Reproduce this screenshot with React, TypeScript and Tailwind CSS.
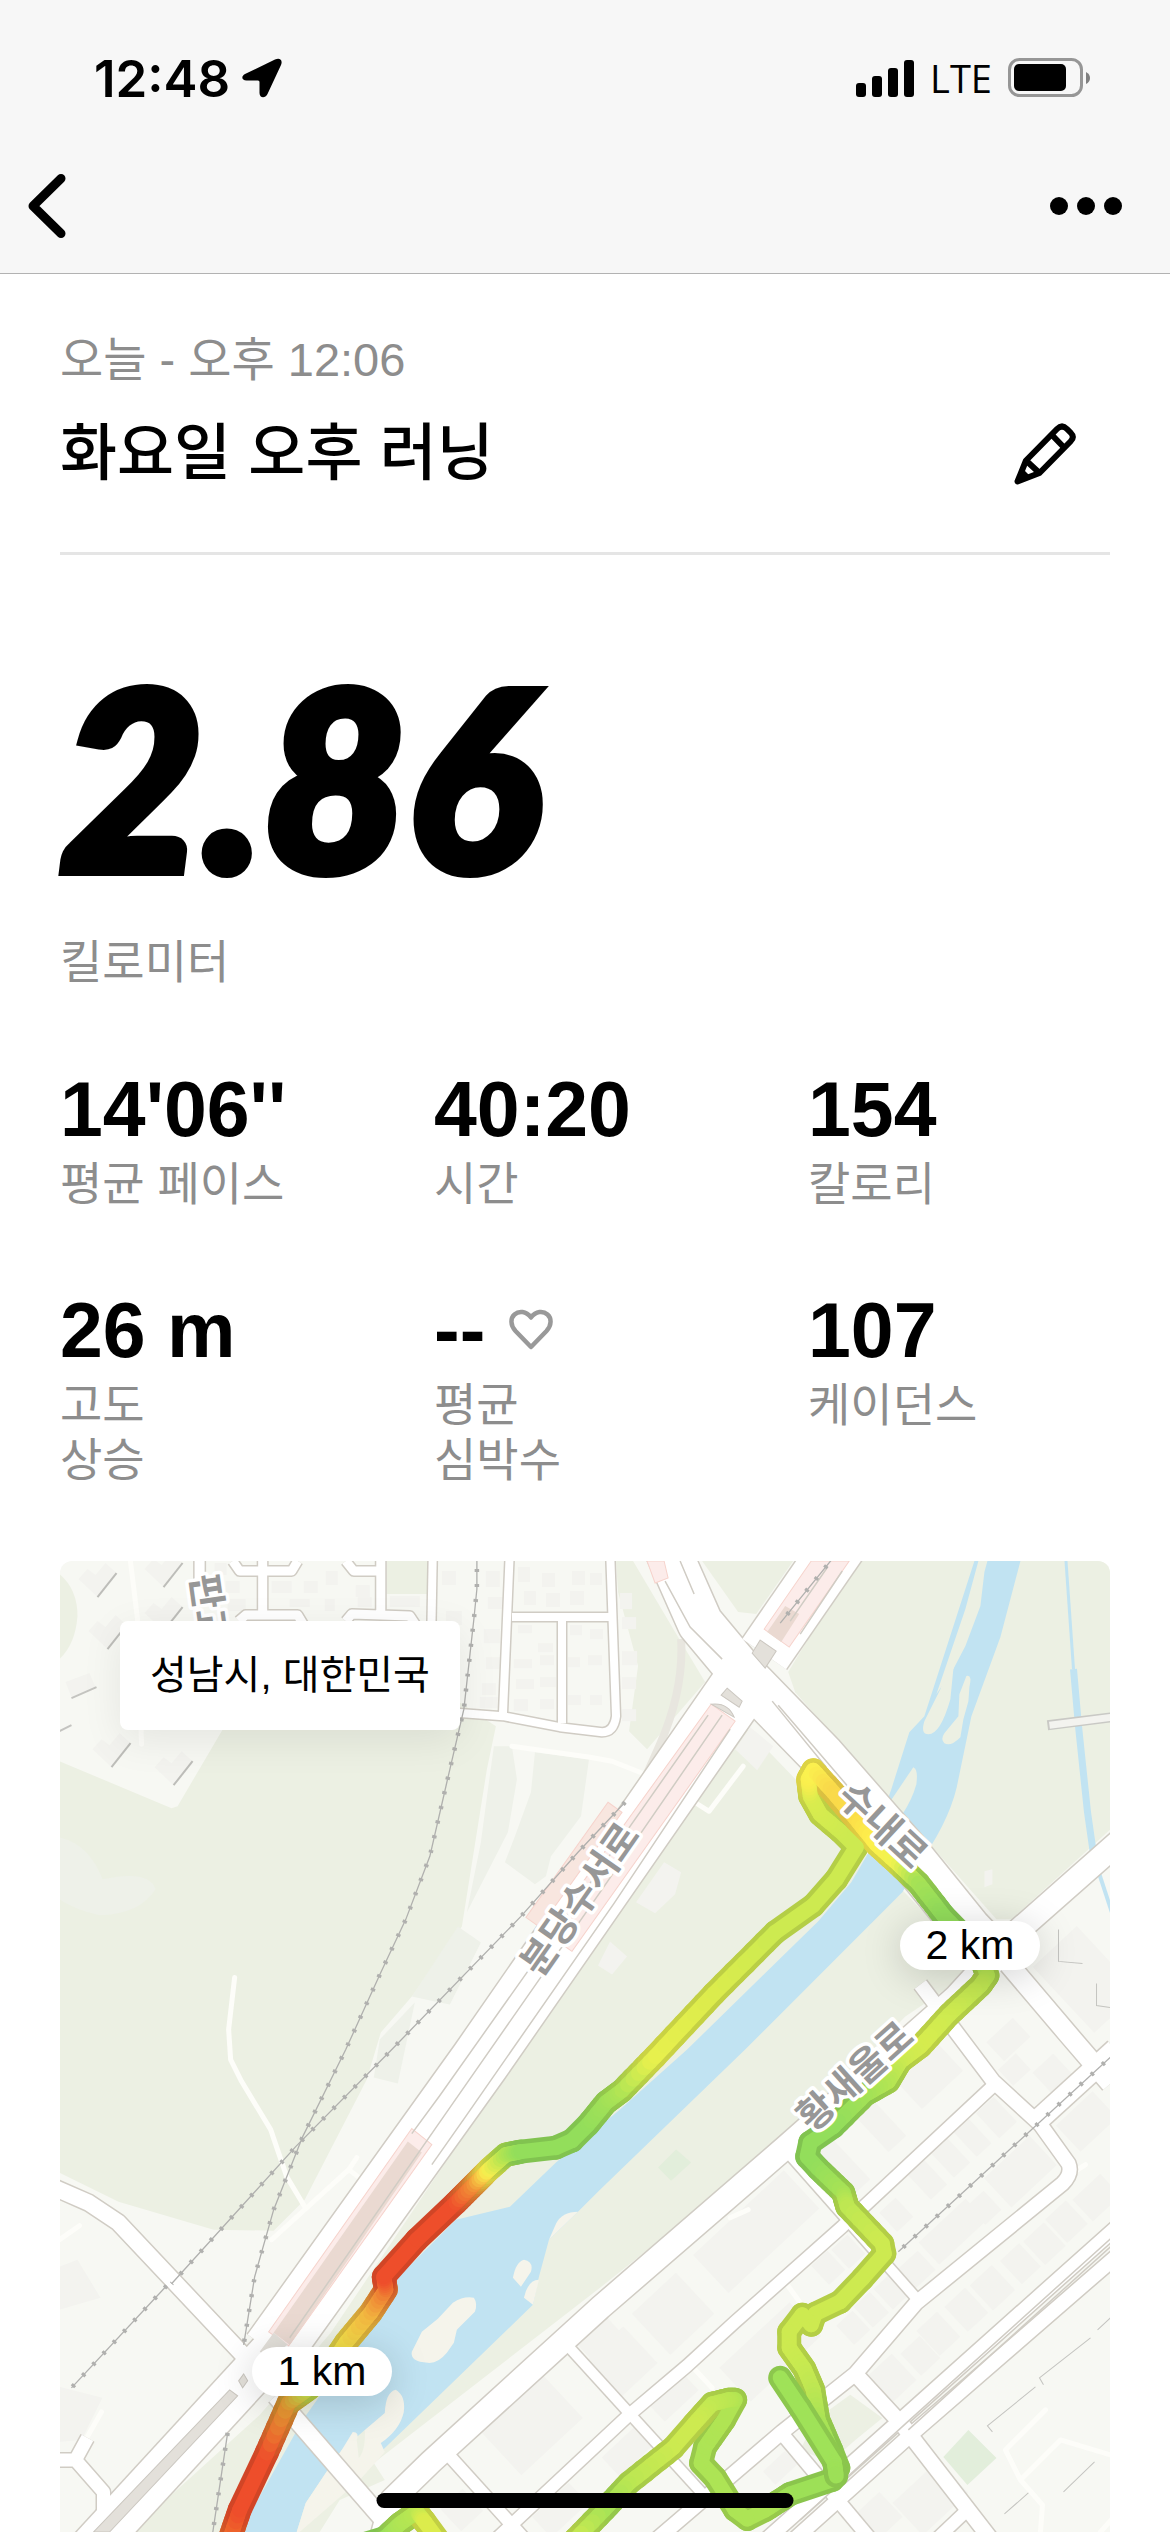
import { Fragment, type ReactNode } from "react";

type Point = [number, number];
type RoutePoint = [number, number, string];

const RED = "#ee4e2b";
const YELLOW = "#f9ee4e";
const LIME = "#cdea50";
const GRASS = "#ade455";
const GREEN = "#93de5b";

// Pace coloured route, slow (red) to fast (green)
const mainRoute: RoutePoint[] = [
  [228, 2545, "#ef7d2c"],
  [240, 2510, RED],
  [267, 2453, RED],
  [289, 2403, "#e69a33"],
  [310, 2388, LIME],
  [328, 2370, LIME],
  [346, 2343, "#f5e14a"],
  [371, 2313, "#f2b840"],
  [386, 2290, "#ee7d33"],
  [384, 2277, RED],
  [417, 2240, RED],
  [456, 2203, RED],
  [474, 2185, "#f08a35"],
  [489, 2170, YELLOW],
  [506, 2155, "#b4e551"],
  [521, 2152, GREEN],
  [556, 2148, GREEN],
  [572, 2141, GREEN],
  [588, 2125, GREEN],
  [606, 2103, "#9fe058"],
  [622, 2091, GRASS],
  [655, 2057, "#e8f04d"],
  [714, 1994, "#dcec4c"],
  [775, 1933, LIME],
  [813, 1906, LIME],
  [836, 1880, LIME],
  [856, 1848, LIME],
  [840, 1832, LIME],
  [820, 1815, "#d3eb4f"],
  [810, 1797, "#d9ec4e"],
  [808, 1780, YELLOW],
  [813, 1771, "#fbf24f"],
  [833, 1793, "#f9d94a"],
  [855, 1819, "#fbdc48"],
  [876, 1845, "#fdf04c"],
  [898, 1865, "#f0f24e"],
  [918, 1884, "#a8e255"],
  [943, 1916, GREEN],
  [978, 1952, GREEN],
  [987, 1976, "#b5e653"],
  [980, 1986, "#bfe752"],
  [949, 2015, LIME],
  [920, 2047, "#d6ec4e"],
  [900, 2062, "#cdea50"],
  [888, 2082, "#b7e653"],
  [865, 2095, "#a5e256"],
  [833, 2127, GREEN],
  [810, 2143, GREEN],
  [807, 2157, GREEN],
  [818, 2169, GREEN],
  [843, 2193, "#a5e256"],
  [847, 2207, "#bde752"],
  [882, 2244, LIME],
  [884, 2254, LIME],
  [862, 2279, LIME],
  [840, 2302, LIME],
  [815, 2314, LIME],
  [811, 2325, LIME],
  [802, 2315, LIME],
  [789, 2332, LIME],
  [789, 2348, LIME],
  [804, 2369, "#c8ea50"],
  [813, 2390, "#c0e752"],
  [818, 2420, GRASS],
  [831, 2450, "#9de057"],
  [838, 2468, "#9de057"],
  [832, 2480, "#9de057"],
  [790, 2494, "#9de057"],
  [765, 2510, GRASS],
  [747, 2519, GRASS],
  [735, 2510, GRASS],
  [715, 2478, GRASS],
  [701, 2463, GRASS],
  [705, 2447, GRASS],
  [724, 2420, "#b0e453"],
  [735, 2400, "#b0e453"],
  [728, 2400, "#b8e652"],
  [712, 2404, "#c0e852"],
  [694, 2424, LIME],
  [673, 2448, LIME],
  [629, 2483, "#bde752"],
  [604, 2510, "#a5e256"],
  [570, 2545, LIME],
];

const spurRoute: RoutePoint[] = [
  [780, 2378, "#9fe258"],
  [800, 2408, "#9fe258"],
  [834, 2462, "#9fe258"],
  [836, 2476, "#9de057"],
];

const homeRoute: RoutePoint[] = [
  [362, 2545, GREEN],
  [385, 2538, GREEN],
  [400, 2524, GRASS],
  [417, 2512, "#b8e652"],
  [425, 2522, "#dcec4c"],
  [442, 2545, "#dcec4c"],
];

const roads: { d: string; w: number }[] = [
  // residential blocks
  { d: "M200 1550V1604", w: 11 },
  { d: "M263 1550V1616M233 1562L240 1572H292L298 1562M239 1622L246 1616H298L304 1626", w: 10 },
  { d: "M381 1550V1616M346 1562L354 1572H381M346 1622L352 1615L410 1617L416 1626", w: 10 },
  { d: "M433 1550L430 1712", w: 9 },
  { d: "M510 1550L503 1716M512 1618H612M562 1618V1724M450 1713L503 1717L560 1728L602 1733Q614 1733 616 1717L610 1550", w: 9 },
  // west side
  { d: "M50 2186L89 2203L119 2223L248 2360", w: 17 },
  { d: "M276 2396L394 2532", w: 18 },
  { d: "M50 2460H76L104 2492V2520M76 2460L88 2438", w: 14 },
  // grid streets
  { d: "M920 1985L993 2082L1040 2125L1068 2164Q1072 2174 1062 2184L916 2303L855 2374L782 2432L650 2545", w: 15 },
  { d: "M1115 2050L1036 2122", w: 22 },
  { d: "M993 2086L842 2227L735 2322L687 2366L629 2415L490 2545", w: 13 },
  { d: "M785 2150L920 2303", w: 11 },
  { d: "M855 2374L902 2425L995 2545", w: 16 },
  { d: "M567 2345L708 2500", w: 11 },
  { d: "M782 2434L875 2545", w: 14 },
  { d: "M446 2452L530 2545", w: 13 },
  { d: "M967 2510L930 2545", w: 13 },
  { d: "M1120 2224L905 2416L760 2545", w: 15 },
  { d: "M1120 2253L916 2430L780 2552", w: 15 },
  // Hwangsaeul-ro and Sunae-ro
  { d: "M1120 1841L1010 1938L955 1998L785 2148L600 2308L431 2462L392 2500L380 2545", w: 24 },
  { d: "M1000 1955L1067 2034L1110 2084", w: 20 },
  { d: "M665 1545L700 1624L745 1678L822 1757L905 1852L968 1930L1004 1968", w: 46 },
  // Bundang-Suseo expressway
  { d: "M840 1545L764 1655", w: 54 },
  { d: "M748 1676L480 2062L272 2352", w: 60 },
  { d: "M272 2352L90 2550", w: 44 },
];

const laneLines = [
  "M722 1716L600 1893L450 2108L290 2338",
  "M730 1730L614 1904L465 2118L432 2165",
  "M708 1716L590 1884L440 2096L412 2134",
  "M826 1570L790 1622M842 1572L800 1635",
  "M680 1562L694 1595M665 1582L690 1628L722 1660",
  "M772 1702L826 1768M778 1706L850 1790",
  "M1110 2239L905 2424L800 2520M1110 2247L908 2430",
];

const railways = [
  "M477 1555V1590L474 1620L464 1710L447 1783L430 1857L406 1920L381 1973L346 2050L303 2137L274 2210L255 2277L244 2345",
  "M228 2433L212 2540",
  "M625 1803L578 1853L521 1917L392 2050L296 2147L172 2284",
  "M167 2286L72 2388",
  "M836 1555L780 1624",
  "M1115 2053L898 2252",
];

const footpaths = [
  "M130 1555L138 1620L142 1745",
  "M235 1978L229 2030L231 2060L242 2082L271 2130L287 2177L305 2207",
  "M272 2240L349 2170L362 2180M349 2170L357 2158",
  "M512 1747L590 1758L612 1762L645 1775",
  "M693 1802L709 1812L743 1767",
  "M60 2240L80 2226M86 2440L102 2412",
  "M1100 2532L1115 2515M1020 2480L1005 2450L1045 2410M1020 2480L1060 2440L1110 2455M1020 2480L1042 2505L1040 2532",
  "M748 2210L730 2218M1085 2165L1068 2176M787 2285L805 2310M695 2370L712 2388",
];

// Lots in the diagonal street grid: centre, width, depth
const lots: [number, number, number, number][] = [
  [756, 2232, 124, 52],
  [673, 2314, 60, 56],
  [622, 2362, 50, 50],
  [770, 2352, 96, 46],
  [925, 2072, 56, 50],
  [842, 2166, 22, 58],
  [880, 2126, 24, 50],
  [927, 2180, 22, 34],
  [950, 2158, 22, 34],
  [972, 2138, 20, 34],
  [996, 2118, 24, 34],
  [952, 2232, 64, 30],
  [984, 2208, 22, 26],
  [1020, 2172, 62, 40],
  [1086, 2122, 50, 36],
  [1096, 2198, 38, 30],
  [1066, 2222, 28, 32],
  [1044, 2244, 28, 32],
  [1020, 2264, 26, 32],
  [992, 2288, 30, 34],
  [966, 2310, 28, 34],
  [938, 2334, 28, 34],
  [920, 2356, 26, 30],
  [892, 2378, 32, 36],
  [916, 2270, 28, 26],
  [891, 2292, 22, 28],
  [871, 2310, 22, 28],
  [853, 2328, 22, 26],
  [848, 2252, 22, 26],
  [828, 2268, 22, 26],
  [896, 2215, 22, 26],
  [1008, 2040, 36, 26],
  [1014, 2070, 24, 22],
  [1052, 2074, 28, 28],
  [674, 2398, 46, 22],
  [629, 2450, 50, 26],
  [531, 2424, 84, 62],
  [606, 2346, 40, 56],
  [930, 2498, 62, 44],
  [876, 2518, 40, 34],
  [780, 2468, 30, 18],
  [560, 2510, 50, 28],
  [462, 2510, 30, 30],
  [1085, 1980, 60, 90],
];

// Apartment towers in the north west corner
const towers: Point[] = [
  [98, 1578],
  [164, 1568],
  [164, 1612],
  [108, 1630],
  [112, 1748],
  [174, 1766],
];

const houses: [number, number, number, number][] = [
  [215, 1564, 12, 12],
  [274, 1566, 20, 12],
  [228, 1600, 18, 12],
  [226, 1582, 14, 12],
  [272, 1582, 20, 12],
  [304, 1582, 14, 12],
  [326, 1572, 12, 14],
  [356, 1586, 14, 12],
  [290, 1600, 20, 8],
  [325, 1600, 10, 12],
  [358, 1598, 14, 10],
  [390, 1597, 30, 11],
  [442, 1572, 14, 14],
  [446, 1612, 16, 14],
  [486, 1572, 14, 16],
  [488, 1598, 18, 12],
  [484, 1630, 16, 14],
  [486, 1658, 16, 12],
  [482, 1684, 14, 12],
  [480, 1698, 18, 11],
  [518, 1568, 12, 15],
  [542, 1574, 13, 14],
  [572, 1572, 13, 14],
  [590, 1574, 12, 12],
  [524, 1592, 12, 14],
  [546, 1594, 14, 14],
  [570, 1592, 14, 14],
  [518, 1626, 14, 8],
  [538, 1644, 15, 9],
  [514, 1660, 18, 9],
  [540, 1656, 14, 10],
  [516, 1680, 18, 10],
  [540, 1678, 16, 10],
  [514, 1700, 14, 12],
  [540, 1700, 14, 10],
  [570, 1626, 12, 10],
  [590, 1630, 13, 10],
  [568, 1658, 12, 10],
  [588, 1656, 14, 10],
  [568, 1696, 13, 10],
  [590, 1696, 12, 10],
  [620, 1594, 12, 16],
  [622, 1618, 14, 12],
  [622, 1652, 15, 14],
  [622, 1678, 14, 12],
  [622, 1710, 14, 12],
];

function mix(a: string, b: string, t: number, shade: number) {
  const channel = (hex: string, i: number) => parseInt(hex.slice(i, i + 2), 16);
  const rgb = [1, 3, 5].map((i) =>
    Math.round((channel(a, i) * (1 - t) + channel(b, i) * t) * shade)
  );
  return `rgb(${rgb.join(",")})`;
}

function RouteLayer({
  points,
  width,
  shade,
}: {
  points: RoutePoint[];
  width: number;
  shade: number;
}) {
  const pieces: ReactNode[] = [];
  for (let i = 1; i < points.length; i++) {
    const [x1, y1, from] = points[i - 1];
    const [x2, y2, to] = points[i];
    const steps = from === to ? 1 : 6;
    for (let s = 0; s < steps; s++) {
      const a = s / steps;
      const b = (s + 1) / steps;
      pieces.push(
        <line
          key={`${i}-${s}`}
          x1={x1 + (x2 - x1) * a}
          y1={y1 + (y2 - y1) * a}
          x2={x1 + (x2 - x1) * b}
          y2={y1 + (y2 - y1) * b}
          stroke={mix(from, to, (a + b) / 2, shade)}
        />
      );
    }
  }
  return (
    <g strokeWidth={width} strokeLinecap="round">
      {pieces}
    </g>
  );
}

function Route({ points }: { points: RoutePoint[] }) {
  return (
    <>
      <RouteLayer points={points} width={24} shade={0.88} />
      <RouteLayer points={points} width={15} shade={1} />
    </>
  );
}

function RoadLabel({ x, y, angle, children }: { x: number; y: number; angle: number; children: string }) {
  return (
    <text
      transform={`translate(${x} ${y}) rotate(${angle})`}
      textAnchor="middle"
      dominantBaseline="central"
      className="fill-[#979797] stroke-white stroke-[7px] text-[38px] font-bold [paint-order:stroke] [stroke-linejoin:round]"
    >
      {children}
    </text>
  );
}

function RunMap() {
  return (
    <svg
      className="h-full w-full"
      viewBox="60 1562 1050 970"
      preserveAspectRatio="xMidYMin slice"
      fill="none"
      role="img"
      aria-label="러닝 경로 지도"
    >
      <rect x="60" y="1562" width="1050" height="970" fill="#f7f8f3" />

      {/* Parks and fields */}
      <g fill="#ecf0e3">
        <path d="M60 1762L172 1809L178 1807L222 1732L250 1690H440L496 1727L487 1770L462 1927L412 1997L381 2033L367 2080L305 2200L274 2231L214 2230L119 2202L60 2173Z" />
        <path d="M60 1575Q78 1590 78 1617Q76 1645 60 1660Z" />
        <path d="M387 1562H428V1595H387Z" />
        <path d="M702 1562L738 1613L756 1615L793 1562Z" />
        <path d="M616 1562H633L675 1633L705 1683L647 1750L629 1732L638 1667L618 1593Z" />
        <path d="M855 1562L788 1673L795 1693L996 1920H1011L1110 1830V1562Z" />
        <path d="M747 1730L940 1930L975 1970L905 2017L782 2143L600 2288L374 2463L385 2480L340 2500L320 2532H131L260 2415L331 2333L535 2030L600 1937Z" />
        <path d="M815 2420L850 2395L882 2418L855 2440L830 2462L800 2450Z" />
      </g>
      <g fill="#eef1e9">
        <path d="M494 1747H512L517 1780L508 1833L467 1913L481 1843L489 1783Z" />
        <path d="M535 1753L589 1760L581 1817L551 1857L546 1877L535 1885L505 1863L515 1837L531 1793Z" />
        <path d="M458 1927L481 1943L450 2005L435 2002L412 1997Z" />
        <path d="M60 1838Q90 1845 103 1880Q150 1870 156 1890Q140 1915 100 1916Q75 1910 60 1900Z" />
        <path d="M415 2003L380 2040L374 2078L398 2084Z" />
      </g>
      <g fill="#e2eedb">
        <path d="M658 2168L676 2150L691 2163L671 2181Z" />
        <path d="M943 2457L968 2430L996 2458L967 2485Z" />
      </g>

      {/* Buildings */}
      <g fill="#f3f3ef">
        {lots.map(([cx, cy, w, h], i) => (
          <rect
            key={i}
            x={cx - w / 2}
            y={cy - h / 2}
            width={w}
            height={h}
            transform={`rotate(-43 ${cx} ${cy})`}
          />
        ))}
        {houses.map(([x, y, w, h], i) => (
          <rect key={i} x={x} y={y} width={w} height={h} />
        ))}
        {towers.map(([x, y], i) => (
          <Fragment key={i}>
            <path d={`M${x - 19} ${y + 2}L${x - 10} ${y - 8}L${x - 2} ${y - 2}L${x + 8} ${y - 14}L${x + 19} ${y - 4}L${x} ${y + 20}Z`} />
            <path d={`M${x} ${y + 20}L${x + 19} ${y - 4}`} stroke="#bdbdb9" strokeWidth="2" />
          </Fragment>
        ))}
        <path d="M66 1683L90 1674L96 1688L72 1698Z" />
        <path d="M60 2267L78 2260L101 2298L60 2310ZM60 2387L103 2398L82 2440L60 2442Z" />
        <path d="M735 1750L750 1728L773 1747L757 1771ZM664 1863L681 1873L675 1895L655 1914L636 1903ZM610 1942L627 1957L612 1975L598 1966Z" />
        <path d="M984 1872L992 1870V1885L984 1888Z" />
      </g>
      <g stroke="#c4c4c0" strokeWidth="1">
        <path d="M72 1699L97 1688M60 1732L72 1726" strokeWidth="2" />
        <path d="M1058 1930V1962L1082 1964M1096 1984V2006L1110 2008M1043 2385L1039 2378L1090 2338M1097 2330L1110 2318M992 2432L987 2426L1035 2387M1063 2492L1094 2462M1004 2514L1029 2492" />
      </g>

      {/* Water */}
      <path
        fill="#c1e3f2"
        d="M1020 1562L1000 1638L971 1717L958 1780Q952 1815 924 1857L902 1893L745 2050L600 2190L578 2212L549 2240L539 2277L533 2305L383 2450L365 2430L342 2450L328 2470L306 2503L297 2532H240L303 2420L374 2320L396 2280L456 2220L510 2207L556 2163L620 2110L687 2050L818 1922L851 1883L869 1852L891 1790L909 1733L924 1717L974 1562H978L965 1610L936 1695L953 1670L965 1647L980 1607L984 1573L987 1562Z"
      />
      <g fill="#ecf0e3">
        <path d="M974 1590L953 1670L950 1700Q940 1735 928 1735Q920 1735 924 1722L940 1690L962 1625Z" />
        <path d="M966 1677Q972 1675 969 1688L968 1702L963 1720L960 1738Q950 1748 944 1744Q940 1740 944 1734L958 1717L959 1695Z" />
        <path d="M913 1768Q918 1770 916 1785Q912 1800 902 1815L886 1808Z" />
      </g>
      <path d="M1065 1555L1073 1670" stroke="#c1e3f2" strokeWidth="3" />
      <path d="M1073 1670L1078 1727L1087 1813L1094 1862" stroke="#c1e3f2" strokeWidth="7" />
      <path d="M1094 1860L1112 1915" stroke="#c1e3f2" strokeWidth="4" />
      <path d="M1047 1726L1112 1718" stroke="#c9c9c5" strokeWidth="10" />
      <path d="M1049 1726L1112 1718" stroke="#f3f3ef" strokeWidth="7" />
      <g fill="#f5f4eb">
        <path d="M474 2298Q478 2304 475 2312L457 2330L454 2343L447 2353Q438 2364 428 2363Q410 2362 412 2352L422 2332L438 2319L453 2303Q464 2296 474 2298Z" />
        <path d="M524 2260Q534 2262 531 2272L521 2287L513 2278Q516 2262 524 2260ZM539 2280L533 2305L524 2298Q528 2280 539 2280Z" />
        <path d="M578 2212Q562 2212 556 2224L549 2240Z" />
        <path d="M396 2390Q406 2396 404 2412Q400 2430 381 2443L385 2452L360 2480L300 2532H297L306 2503L328 2470L342 2450L353 2432Q360 2432 357 2440L359 2458Q366 2450 365 2430L385 2413Q386 2392 396 2390Z" />
      </g>

      {/* Paths, roads and rails */}
      <g stroke="#fdfdf9" strokeWidth="5" strokeLinecap="round" strokeLinejoin="round">
        {footpaths.map((d) => (
          <path key={d} d={d} />
        ))}
      </g>
      <path d="M681 1640Q684 1690 660 1745L640 1790" stroke="#e8e6df" strokeWidth="8" />
      <g stroke="#d0ccc4" strokeLinejoin="round">
        {roads.map(({ d, w }) => (
          <path key={d} d={d} strokeWidth={w + 2} />
        ))}
      </g>
      <g stroke="#ffffff" strokeLinejoin="round">
        {roads.map(({ d, w }) => (
          <path key={d} d={d} strokeWidth={w - 1} />
        ))}
      </g>
      <g fill="#fcecea" stroke="#f6d3cc" strokeWidth="1">
        <path d="M711 1705L735 1722L572 1952L562 1945L556 1920Z" />
        <path d="M608 1803L622 1813L540 1928L526 1918Z" fill="#f8e6df" />
        <path d="M811 1562H849L789 1648L764 1630Z" />
        <path d="M647 1562H664L668 1579L655 1584Z" />
        <path d="M412 2129L432 2145L289 2346L269 2332Z" />
      </g>
      <g fill="#ead9d1">
        <path d="M408 2142L422 2153L290 2345L274 2333Z" />
        <path d="M785 1607L799 1615L781 1643L767 1633Z" />
        <path d="M274 2333L288 2345L270 2358L260 2352Z" fill="#e3e0da" />
      </g>
      <g fill="#e3e0da" stroke="#cbc7c0" strokeWidth="1">
        <path d="M760 1641L776 1652L765 1669L752 1654ZM727 1689L742 1702L739 1708L721 1696ZM711 1705Q728 1703 734 1718Z" />
        <path d="M239 2381L244 2374L248 2381L243 2388ZM230 2390L238 2396L110 2532H94Z" />
      </g>
      <g stroke="#d0ccc4" strokeWidth="1.5">
        {laneLines.map((d) => (
          <path key={d} d={d} />
        ))}
      </g>
      <g stroke="#b0b0ae">
        {railways.map((d) => (
          <Fragment key={d}>
            <path d={d} strokeWidth="1.3" />
            <path d={d} strokeWidth="4.5" strokeDasharray="3 12" />
          </Fragment>
        ))}
      </g>

      <Route points={homeRoute} />
      <Route points={mainRoute} />
      <Route points={spurRoute} />

      <RoadLabel x={580} y={1900} angle={-55}>분당수서로</RoadLabel>
      <RoadLabel x={882} y={1826} angle={43}>수내로</RoadLabel>
      <RoadLabel x={855} y={2077} angle={-42}>황새울로</RoadLabel>
      <RoadLabel x={211} y={1627} angle={82}>판교로</RoadLabel>
    </svg>
  );
}

function StatusBar() {
  return (
    <div className="flex h-[156px] items-center justify-between pr-[79px] pl-[94px] font-['Inter',sans-serif]">
      <div className="flex items-center gap-3">
        <span className="text-[51px] leading-none font-semibold">12:48</span>
        <svg className="size-10" viewBox="0 0 40 40" aria-hidden="true">
          <path d="M3 16L33 1.5C38 -.5 41 2 39 7L25.500 36C23 41 17.500 40 17.500 35V24Q17.500 22.500 16 22.500H4.500C-.5 22.500 -1 18 3 16Z" />
        </svg>
      </div>
      <div className="flex items-center">
        <svg className="h-[38px] w-[58px]" viewBox="0 0 58 38" aria-hidden="true">
          <rect x="0" y="24" width="10" height="14" rx="3" />
          <rect x="16" y="17" width="10" height="21" rx="3" />
          <rect x="32" y="9" width="10" height="29" rx="3" />
          <rect x="48" y="1" width="10" height="37" rx="3" />
        </svg>
        <span className="mx-4 text-[38px] leading-none font-medium font-['Open_Sans',sans-serif]">LTE</span>
        <svg className="h-10 w-[83px]" viewBox="0 0 83 40" aria-hidden="true">
          <rect x="1.500" y="1.500" width="72" height="36" rx="10" fill="none" stroke="#969696" strokeWidth="3" />
          <rect x="6" y="6" width="52" height="27" rx="5" />
          <path d="M78 14Q82 16 82 20Q82 24 78 26Z" fill="#808080" />
        </svg>
      </div>
    </div>
  );
}

function Stat({ label, children }: { label: string; children: ReactNode }) {
  return (
    <div className="flex flex-col gap-1.5">
      <dd className="order-1 flex items-center gap-6 text-[77px] leading-[84px] font-bold">{children}</dd>
      <dt className="order-2 text-[46px] leading-[55px] whitespace-pre-line text-[#8d8d8d]">{label}</dt>
    </div>
  );
}

const pinClass =
  "absolute flex h-[49px] w-[140px] items-center justify-center rounded-full bg-white text-[41px] leading-none shadow-[0_6px_40px_rgba(0,0,0,0.18)]";

export default function App() {
  return (
    <div className="flex min-h-screen flex-col bg-white font-['Liberation_Sans','Noto_Sans_CJK_KR',sans-serif] text-black">
      <header className="border-b border-[#b2b2b2] bg-[#f7f7f7] pb-[17px]">
        <StatusBar />
        <nav className="flex h-[100px] items-center justify-between pr-12 pl-7">
          <button type="button" aria-label="뒤로">
            <svg className="h-16 w-[38px]" viewBox="0 0 38 64" fill="none" aria-hidden="true">
              <path d="M33 4.500L5 32L33 59.500" stroke="black" strokeWidth="9" strokeLinecap="round" strokeLinejoin="round" />
            </svg>
          </button>
          <button type="button" aria-label="더 보기">
            <svg className="h-[18px] w-[72px]" viewBox="0 0 72 18" aria-hidden="true">
              <circle cx="9" cy="9" r="9" />
              <circle cx="36" cy="9" r="9" />
              <circle cx="63" cy="9" r="9" />
            </svg>
          </button>
        </nav>
      </header>

      <main className="flex flex-1 flex-col px-[60px] pt-14">
        <p className="text-[47px] leading-[60px] text-[#8d8d8d]">오늘 - 오후 12:06</p>
        <div className="mt-[22px] flex items-center justify-between border-b-[3px] border-[#e5e5e5] pr-[34px] pb-14">
          <h1 className="text-[62px] leading-[84px] font-medium">화요일 오후 러닝</h1>
          <button type="button" aria-label="이름 편집">
            <svg className="size-[62px]" viewBox="0 0 62 62" fill="none" stroke="black" strokeWidth="6" strokeLinejoin="round" aria-hidden="true">
              <path d="M3.500 58.500L12 37.500L43 6Q48 1 53 6L56.500 9.500Q61 14 56.500 18.500L25.500 50Z" />
              <path d="M37.500 11.500L50.500 25M12 37.500L25.500 50" />
              <path d="M4 58L9 46L16 53Z" fill="black" stroke="none" />
            </svg>
          </button>
        </div>

        <p className="mt-[120px] text-[248px] leading-[200px] font-black italic font-['Lato',sans-serif] [-webkit-text-stroke:10px_black]">
          2.86
        </p>
        <p className="mt-[60px] text-[46px] leading-[55px] text-[#8d8d8d]">킬로미터</p>

        <dl className="mt-[77px] grid grid-cols-3 gap-x-[72px] gap-y-[76px]">
          <Stat label="평균 페이스">14'06''</Stat>
          <Stat label="시간">40:20</Stat>
          <Stat label="칼로리">154</Stat>
          <Stat label={"고도\n상승"}>26 m</Stat>
          <Stat label={"평균\n심박수"}>
            <span>--</span>
            <svg className="h-[42px] w-11" viewBox="0 0 44 42" fill="none" aria-hidden="true">
              <path
                d="M22 38L6.500 22C1 16 1.500 9 5.500 5.500C10 1.500 17 2 22 8.500C27 2 34 1.500 38.500 5.500C42.500 9 43 16 37.500 22Z"
                stroke="#999"
                strokeWidth="4.500"
                strokeLinejoin="round"
              />
            </svg>
          </Stat>
          <Stat label="케이던스">107</Stat>
        </dl>

        <section className="relative mt-[73px] h-[970px] flex-1 overflow-hidden rounded-t-xl" aria-label="지도">
          <div className="absolute inset-0">
            <RunMap />
          </div>
          <p className="absolute top-[60px] left-[60px] rounded-lg bg-white px-[30px] py-6 text-[40px] leading-[61px] shadow-[0_10px_40px_rgba(0,0,0,0.08)]">
            성남시, 대한민국
          </p>
          <span className={`${pinClass} top-[360px] left-4/5`}>2 km</span>
          <span className={`${pinClass} top-[786px] left-[192px]`}>1 km</span>
        </section>
      </main>

      <div className="fixed bottom-6 left-1/2 h-[15px] w-[417px] -translate-x-1/2 rounded-full bg-black" />
    </div>
  );
}
